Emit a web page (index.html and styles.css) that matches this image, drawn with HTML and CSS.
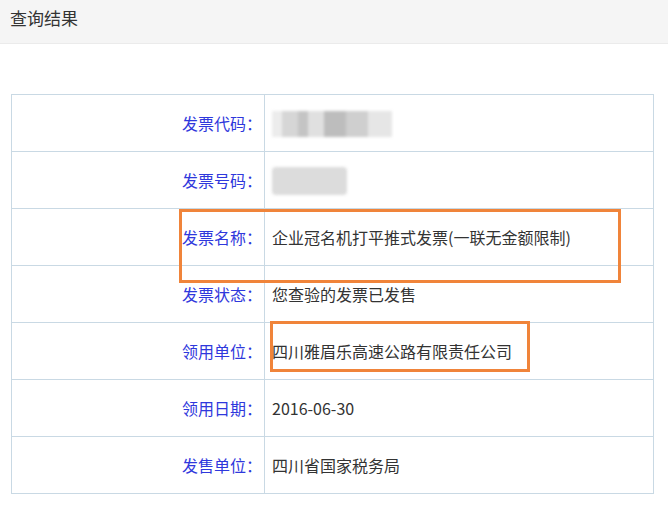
FILE: index.html
```html
<!DOCTYPE html>
<html lang="zh-CN">
<head>
  <meta charset="UTF-8">
  <title>查询结果</title>
  <link rel="stylesheet" href="styles.css">
</head>
<body>
  <div class="head">查询结果</div>
  <div class="panel">
    <table class="result">
      <tr><td class="lbl">发票代码：</td><td class="val"><span class="mask mask-code"></span></td></tr>
      <tr><td class="lbl">发票号码：</td><td class="val"><span class="mask mask-num"></span></td></tr>
      <tr><td class="lbl">发票名称：</td><td class="val">企业冠名机打平推式发票(一联无金额限制)</td></tr>
      <tr><td class="lbl">发票状态：</td><td class="val">您查验的发票已发售</td></tr>
      <tr><td class="lbl">领用单位：</td><td class="val">四川雅眉乐高速公路有限责任公司</td></tr>
      <tr><td class="lbl">领用日期：</td><td class="val">2016-06-30</td></tr>
      <tr><td class="lbl">发售单位：</td><td class="val">四川省国家税务局</td></tr>
    </table>
    <!-- annotation boxes drawn over the table -->
    <div class="mark mark-name"></div>
    <div class="mark mark-unit"></div>
  </div>
</body>
</html>
```

FILE: styles.css
```css
body { margin: 0; background: #fff; font-family: "Microsoft YaHei", "Noto Sans CJK SC", sans-serif; color: #333; }
.head { height: 43px; line-height: 36px; padding-left: 10px; background: #f5f5f5; border-bottom: 1px solid #ebebeb; font-size: 17px; color: #333; }
.panel { position: relative; padding: 50px 0 0 11px; }
.result { border-collapse: collapse; width: 643px; background: #fff; }
.result td { border: 1px solid #c9d9e4; height: 56px; padding: 0; font-size: 16px; }
.lbl { width: 250px; text-align: right; padding-right: 2px !important; color: #2f38dc; }
.val { padding-left: 7px !important; color: #333; }
.mask { display: block; filter: blur(1.5px); }
.mask-code { width: 120px; height: 26px; margin-top: 1px;
  background: linear-gradient(90deg, #ececec 0 8%, #d6d6d6 8% 22%, #c4c4c4 22% 30%, #e0e0e0 30% 43%, #bdbdbd 43% 62%, #cfcfcf 62% 80%, #e6e6e6 80% 100%); }
.mask-num { width: 75px; height: 28px; margin-top: 1px; background: #dcdcdc; border-radius: 4px; }
.mark { position: absolute; border: 3px solid #f0843a; }
.mark-name { left: 179px; top: 165px; width: 436px; height: 68px; }
.mark-unit { left: 270px; top: 277px; width: 254px; height: 45px; }
```
